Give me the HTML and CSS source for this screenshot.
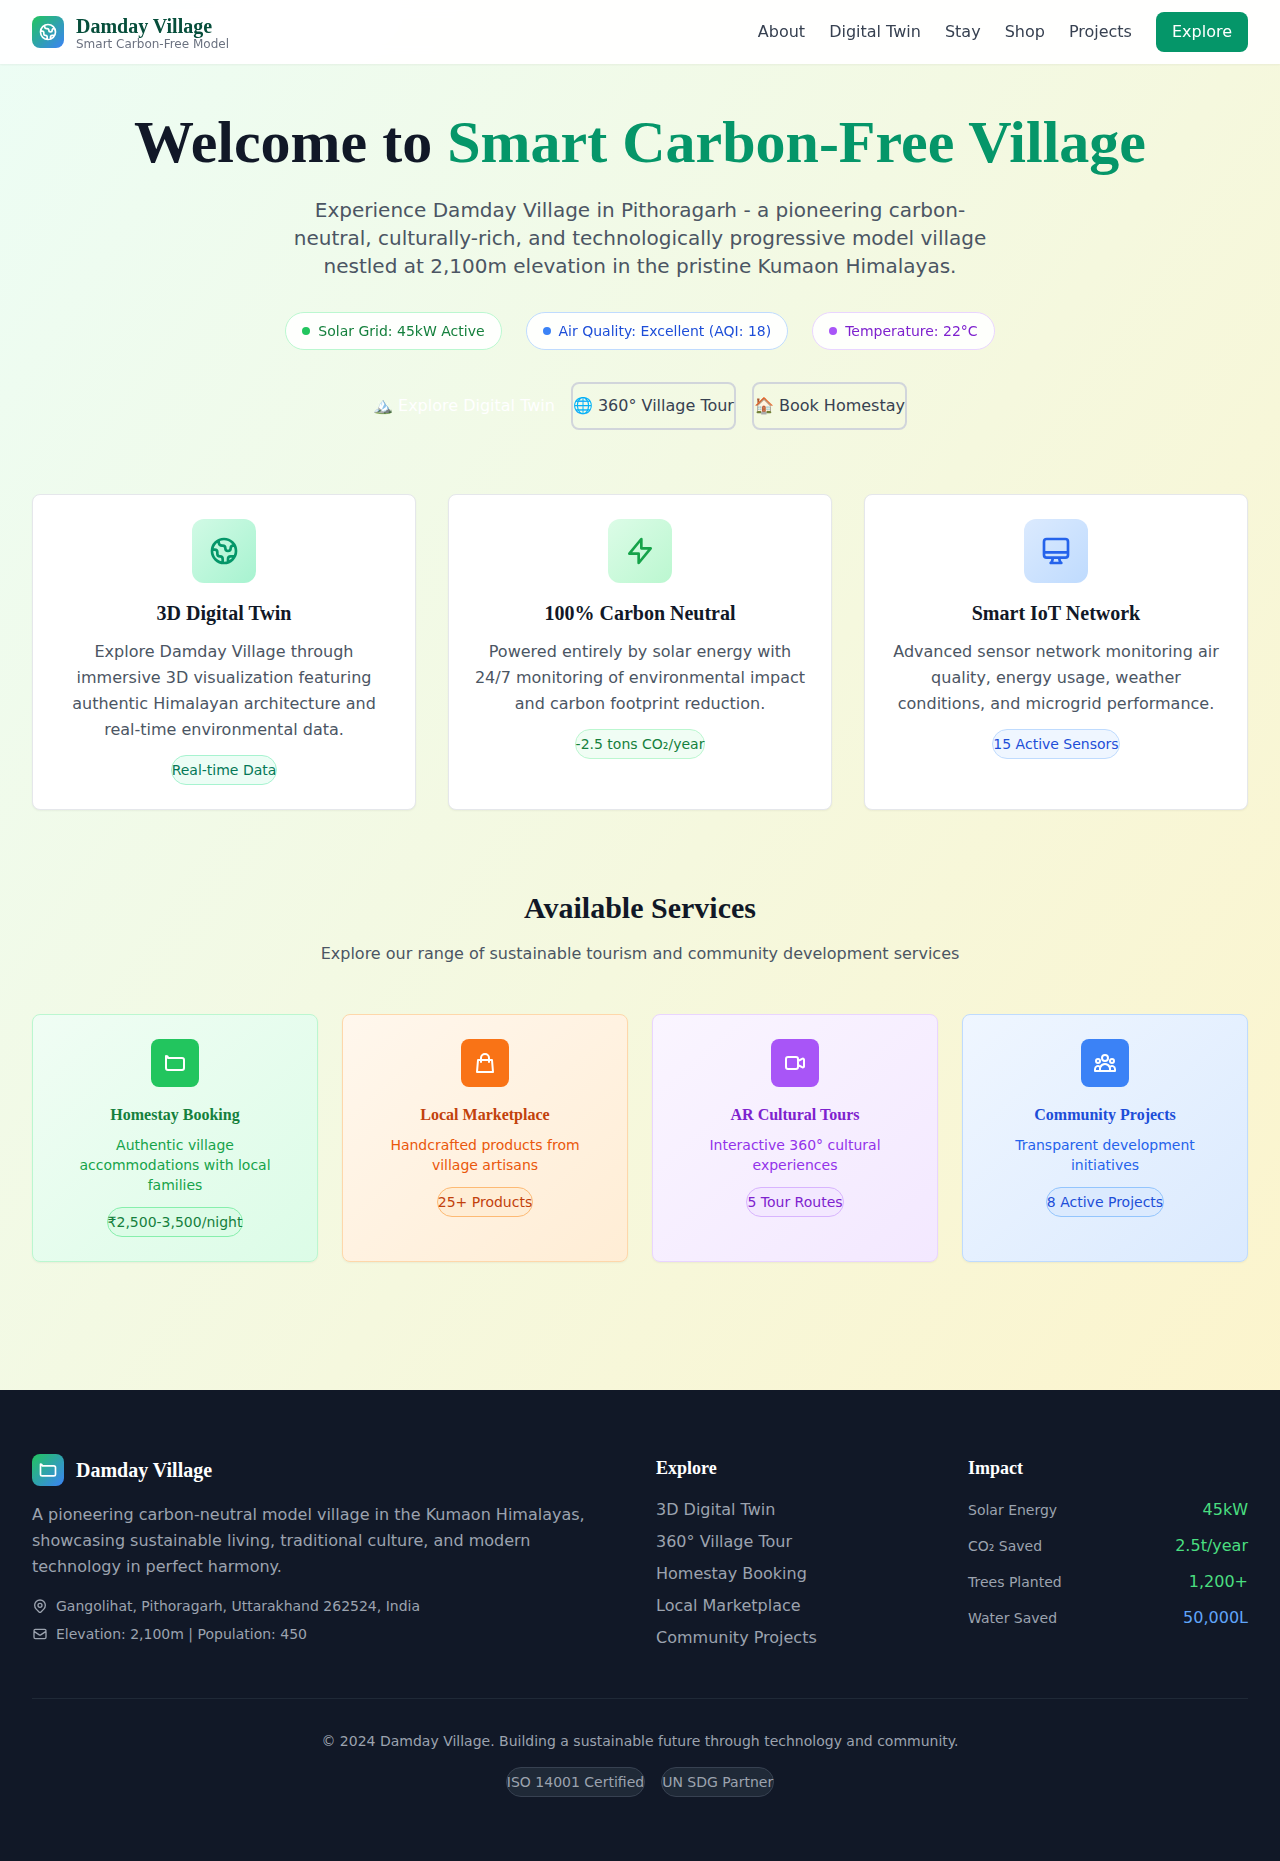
FILE: index.html
```html
<!DOCTYPE html>
<html lang="en">
<head>
<meta charset="utf-8">
<title>Damday Village</title>
<link rel="stylesheet" href="styles.css">
</head>
<body>
<svg class="sprite" width="0" height="0" aria-hidden="true">
  <symbol id="globe" viewBox="0 0 24 24"><path d="M3.055 11H5a2 2 0 012 2v1a2 2 0 002 2 2 2 0 012 2v2.945M8 3.935V5.5A2.5 2.5 0 0010.5 8h.5a2 2 0 012 2 2 2 0 104 0 2 2 0 012-2h1.064M15 20.488V18a2 2 0 012-2h3.064M21 12a9 9 0 11-18 0 9 9 0 0118 0z"/></symbol>
  <symbol id="bolt" viewBox="0 0 24 24"><path d="M13 10V3L4 14h7v7l9-11h-7z"/></symbol>
  <symbol id="monitor" viewBox="0 0 24 24"><path d="M9.75 17L9 20l-1 1h8l-1-1-.75-3M3 13h18M5 17h14a2 2 0 002-2V5a2 2 0 00-2-2H5a2 2 0 00-2 2v10a2 2 0 002 2z"/></symbol>
  <symbol id="stay" viewBox="0 0 24 24"><path d="M3 7v10a2 2 0 002 2h14a2 2 0 002-2V9a2 2 0 00-2-2H5a2 2 0 00-2-2z"/></symbol>
  <symbol id="bag" viewBox="0 0 24 24"><path d="M16 11V7a4 4 0 00-8 0v4M5 9h14l1 12H4L5 9z"/></symbol>
  <symbol id="video" viewBox="0 0 24 24"><path d="M15 10l4.553-2.276A1 1 0 0121 8.618v6.764a1 1 0 01-1.447.894L15 14M5 18h8a2 2 0 002-2V8a2 2 0 00-2-2H5a2 2 0 00-2 2v8a2 2 0 002 2z"/></symbol>
  <symbol id="group" viewBox="0 0 24 24"><path d="M17 20h5v-2a3 3 0 00-5.356-1.857M17 20H7m10 0v-2c0-.656-.126-1.283-.356-1.857M7 20H2v-2a3 3 0 015.356-1.857M7 20v-2c0-.656.126-1.283.356-1.857m0 0a5.002 5.002 0 019.288 0M15 7a3 3 0 11-6 0 3 3 0 016 0zm6 3a2 2 0 11-4 0 2 2 0 014 0zM7 10a2 2 0 11-4 0 2 2 0 014 0z"/></symbol>
  <symbol id="pin" viewBox="0 0 24 24"><path d="M17.657 16.657L13.414 20.9a1.998 1.998 0 01-2.827 0l-4.244-4.243a8 8 0 1111.314 0z"/><path d="M15 11a3 3 0 11-6 0 3 3 0 016 0z"/></symbol>
  <symbol id="mail" viewBox="0 0 24 24"><path d="M3 8l7.89 5.26a2 2 0 002.22 0L21 8M5 19h14a2 2 0 002-2V7a2 2 0 00-2-2H5a2 2 0 00-2 2v10a2 2 0 002 2z"/></symbol>
</svg>

<div class="page">
  <header class="header">
    <div class="brand">
      <div class="logo"><svg class="icon icon-20"><use href="#globe"/></svg></div>
      <div>
        <div class="brand-name">Damday Village</div>
        <p class="brand-sub">Smart Carbon-Free Model</p>
      </div>
    </div>
    <nav class="nav">
      <a>About</a><a>Digital Twin</a><a>Stay</a><a>Shop</a><a>Projects</a>
      <button class="nav-cta">Explore</button>
    </nav>
  </header>

  <main class="main">
    <section class="hero">
      <h1>Welcome to <span>Smart Carbon-Free Village</span></h1>
      <p class="lead">Experience Damday Village in Pithoragarh - a pioneering carbon-neutral, culturally-rich, and technologically progressive model village nestled at 2,100m elevation in the pristine Kumaon Himalayas.</p>
      <div class="stats">
        <div class="stat stat-green"><i class="dot"></i><span>Solar Grid: 45kW Active</span></div>
        <div class="stat stat-blue"><i class="dot"></i><span>Air Quality: Excellent (AQI: 18)</span></div>
        <div class="stat stat-purple"><i class="dot"></i><span>Temperature: 22°C</span></div>
      </div>
      <div class="actions">
        <button class="btn btn-primary">🏔️ Explore Digital Twin</button>
        <button class="btn btn-outline">🌐 360° Village Tour</button>
        <button class="btn btn-outline">🏠 Book Homestay</button>
      </div>
    </section>

    <section class="features">
      <article class="feature emerald">
        <div class="tile"><svg class="icon icon-32"><use href="#globe"/></svg></div>
        <h3>3D Digital Twin</h3>
        <p>Explore Damday Village through immersive 3D visualization featuring authentic Himalayan architecture and real-time environmental data.</p>
        <div class="badge">Real-time Data</div>
      </article>
      <article class="feature green">
        <div class="tile"><svg class="icon icon-32"><use href="#bolt"/></svg></div>
        <h3>100% Carbon Neutral</h3>
        <p>Powered entirely by solar energy with 24/7 monitoring of environmental impact and carbon footprint reduction.</p>
        <div class="badge">-2.5 tons CO₂/year</div>
      </article>
      <article class="feature blue">
        <div class="tile"><svg class="icon icon-32"><use href="#monitor"/></svg></div>
        <h3>Smart IoT Network</h3>
        <p>Advanced sensor network monitoring air quality, energy usage, weather conditions, and microgrid performance.</p>
        <div class="badge">15 Active Sensors</div>
      </article>
    </section>

    <section class="services">
      <h2>Available Services</h2>
      <p class="services-sub">Explore our range of sustainable tourism and community development services</p>
      <div class="service-grid">
        <article class="service s-green">
          <div class="tile"><svg class="icon icon-24"><use href="#stay"/></svg></div>
          <h3>Homestay Booking</h3>
          <p>Authentic village accommodations with local families</p>
          <div class="badge">₹2,500-3,500/night</div>
        </article>
        <article class="service s-orange">
          <div class="tile"><svg class="icon icon-24"><use href="#bag"/></svg></div>
          <h3>Local Marketplace</h3>
          <p>Handcrafted products from village artisans</p>
          <div class="badge">25+ Products</div>
        </article>
        <article class="service s-purple">
          <div class="tile"><svg class="icon icon-24"><use href="#video"/></svg></div>
          <h3>AR Cultural Tours</h3>
          <p>Interactive 360° cultural experiences</p>
          <div class="badge">5 Tour Routes</div>
        </article>
        <article class="service s-blue">
          <div class="tile"><svg class="icon icon-24"><use href="#group"/></svg></div>
          <h3>Community Projects</h3>
          <p>Transparent development initiatives</p>
          <div class="badge">8 Active Projects</div>
        </article>
      </div>
    </section>
  </main>

  <footer class="footer">
    <div class="footer-grid">
      <div class="about">
        <div class="brand">
          <div class="logo"><svg class="icon icon-20"><use href="#stay"/></svg></div>
          <div class="footer-name">Damday Village</div>
        </div>
        <p class="about-text">A pioneering carbon-neutral model village in the Kumaon Himalayas, showcasing sustainable living, traditional culture, and modern technology in perfect harmony.</p>
        <div class="contacts">
          <div class="contact"><svg class="icon icon-16"><use href="#pin"/></svg><span>Gangolihat, Pithoragarh, Uttarakhand 262524, India</span></div>
          <div class="contact"><svg class="icon icon-16"><use href="#mail"/></svg><span>Elevation: 2,100m | Population: 450</span></div>
        </div>
      </div>
      <div>
        <h4>Explore</h4>
        <ul class="links">
          <li>3D Digital Twin</li><li>360° Village Tour</li><li>Homestay Booking</li><li>Local Marketplace</li><li>Community Projects</li>
        </ul>
      </div>
      <div>
        <h4>Impact</h4>
        <div class="impact">
          <div class="row"><span class="label">Solar Energy</span><span class="value">45kW</span></div>
          <div class="row"><span class="label">CO₂ Saved</span><span class="value">2.5t/year</span></div>
          <div class="row"><span class="label">Trees Planted</span><span class="value">1,200+</span></div>
          <div class="row"><span class="label">Water Saved</span><span class="value value-blue">50,000L</span></div>
        </div>
      </div>
    </div>
    <div class="legal">
      <p>© 2024 Damday Village. Building a sustainable future through technology and community.</p>
      <div class="certs">
        <div class="badge">ISO 14001 Certified</div>
        <div class="badge">UN SDG Partner</div>
      </div>
    </div>
  </footer>
</div>
</body>
</html>
```
FILE: styles.css
```css
*, *::before, *::after { box-sizing: border-box; }

body, h1, h2, h3, h4, p, ul { margin: 0; padding: 0; }

body {
  font-family: "DejaVu Sans", "Noto Color Emoji", sans-serif;
  font-size: 16px;
  line-height: 24px;
  color: #111827;
}

h1, h2, h3, h4, .brand-name, .footer-name {
  font-family: "Liberation Serif", serif;
  font-weight: 700;
}

button {
  font: inherit;
  border: 0;
  padding: 0;
  background: transparent;
}

.sprite { position: absolute; }

.page {
  min-height: 100vh;
  background: linear-gradient(to bottom right, #ecfdf5, #f5f8de 50%, #fef3c7);
}

.icon {
  display: block;
  fill: none;
  stroke: currentColor;
  stroke-width: 2;
  stroke-linecap: round;
  stroke-linejoin: round;
}
.icon-16 { width: 16px; height: 16px; }
.icon-20 { width: 20px; height: 20px; }
.icon-24 { width: 24px; height: 24px; }
.icon-32 { width: 32px; height: 32px; }

/* Header */
.header {
  height: 64px;
  padding: 0 32px;
  display: flex;
  align-items: center;
  justify-content: space-between;
  background: rgba(255, 255, 255, 0.95);
  box-shadow: 0 1px 2px rgba(0, 0, 0, 0.05);
  backdrop-filter: blur(8px);
}
.brand { display: flex; align-items: center; gap: 12px; }
.logo {
  width: 32px;
  height: 32px;
  display: grid;
  place-items: center;
  color: #fff;
  border-radius: 8px;
  background: linear-gradient(to bottom right, #22c55e, #3b82f6);
}
.brand-name { font-size: 20px; line-height: 28px; color: #064e3b; }
.brand-sub { margin-top: -4px; font-size: 12px; line-height: 16px; color: #6b7280; }
.nav { display: flex; align-items: center; gap: 24px; color: #374151; }
.nav-cta {
  height: 40px;
  padding: 0 16px;
  color: #fff;
  background: #059669;
  border-radius: 8px;
}

/* Hero */
.main { padding: 48px 32px 128px; }
.hero { text-align: center; }
h1 { font-size: 60px; line-height: 60px; }
h1 span { color: #059669; }
.lead {
  max-width: 720px;
  margin: 24px auto 32px;
  font-size: 20px;
  line-height: 28px;
  color: #4b5563;
}
.stats { display: flex; justify-content: center; gap: 24px; }
.stat {
  display: flex;
  align-items: center;
  gap: 8px;
  padding: 8px 16px;
  font-size: 14px;
  line-height: 20px;
  border: 1px solid;
  border-radius: 19px;
  background: rgba(255, 255, 255, 0.9);
  backdrop-filter: blur(4px);
}
.dot { width: 8px; height: 8px; border-radius: 50%; }
.stat-green { color: #15803d; border-color: #bbf7d0; }
.stat-green .dot { background: #22c55e; }
.stat-blue { color: #1d4ed8; border-color: #bfdbfe; }
.stat-blue .dot { background: #3b82f6; }
.stat-purple { color: #7e22ce; border-color: #e9d5ff; }
.stat-purple .dot { background: #a855f7; }

.actions { display: flex; justify-content: center; gap: 16px; margin-top: 32px; }
.btn { height: 48px; border-radius: 8px; white-space: nowrap; }
.btn-primary { color: #fff; }
.btn-outline { color: #374151; border: 2px solid #d1d5db; }

/* Feature cards */
.features {
  display: grid;
  grid-template-columns: repeat(3, 1fr);
  gap: 32px;
  margin-top: 64px;
}
.feature, .service {
  display: flex;
  flex-direction: column;
  align-items: center;
  padding: 24px;
  text-align: center;
  border: 1px solid #e5e7eb;
  border-radius: 8px;
  box-shadow: 0 1px 2px rgba(0, 0, 0, 0.05);
}
.feature { background: #fff; }
.tile { display: grid; place-items: center; }
.feature .tile { width: 64px; height: 64px; border-radius: 12px; }
.feature h3 { margin: 16px 0 12px; font-size: 20px; line-height: 28px; }
.feature p { line-height: 26px; color: #4b5563; }
.badge {
  margin-top: 12px;
  padding: 4px 0;
  font-size: 14px;
  line-height: 20px;
  border: 1px solid;
  border-radius: 15px;
  white-space: nowrap;
}
.emerald .tile { color: #059669; background: linear-gradient(to bottom right, #d1fae5, #a7f3d0); }
.emerald .badge { color: #047857; background: #ecfdf5; border-color: #a7f3d0; }
.green .tile { color: #16a34a; background: linear-gradient(to bottom right, #dcfce7, #bbf7d0); }
.green .badge { color: #15803d; background: #f0fdf4; border-color: #bbf7d0; }
.blue .tile { color: #2563eb; background: linear-gradient(to bottom right, #dbeafe, #bfdbfe); }
.blue .badge { color: #1d4ed8; background: #eff6ff; border-color: #bfdbfe; }

/* Services */
.services { margin-top: 80px; text-align: center; }
h2 { font-size: 30px; line-height: 36px; }
.services-sub { margin: 16px 0 48px; color: #4b5563; }
.service-grid { display: grid; grid-template-columns: repeat(4, 1fr); gap: 24px; }
.service .tile { width: 48px; height: 48px; color: #fff; border-radius: 8px; }
.service h3 { margin: 16px 0 8px; font-size: 16px; line-height: 24px; }
.service p { font-size: 14px; line-height: 20px; }

.s-green { background: linear-gradient(to bottom right, #f0fdf4, #dcfce7); border-color: #bbf7d0; }
.s-green .tile { background: #22c55e; }
.s-green h3 { color: #15803d; }
.s-green p { color: #16a34a; }
.s-green .badge { color: #15803d; background: #dcfce7; border-color: #86efac; }

.s-orange { background: linear-gradient(to bottom right, #fff7ed, #ffedd5); border-color: #fed7aa; }
.s-orange .tile { background: #f97316; }
.s-orange h3 { color: #c2410c; }
.s-orange p { color: #ea580c; }
.s-orange .badge { color: #c2410c; background: #ffedd5; border-color: #fdba74; }

.s-purple { background: linear-gradient(to bottom right, #faf5ff, #f3e8ff); border-color: #e9d5ff; }
.s-purple .tile { background: #a855f7; }
.s-purple h3 { color: #7e22ce; }
.s-purple p { color: #9333ea; }
.s-purple .badge { color: #7e22ce; background: #f3e8ff; border-color: #d8b4fe; }

.s-blue { background: linear-gradient(to bottom right, #eff6ff, #dbeafe); border-color: #bfdbfe; }
.s-blue .tile { background: #3b82f6; }
.s-blue h3 { color: #1d4ed8; }
.s-blue p { color: #2563eb; }
.s-blue .badge { color: #1d4ed8; background: #dbeafe; border-color: #93c5fd; }

/* Footer */
.footer { padding: 64px 32px; color: #9ca3af; background: #111827; }
.footer-grid { display: grid; grid-template-columns: repeat(4, 1fr); gap: 32px; }
.about { grid-column: span 2; }
.footer-name { font-size: 20px; line-height: 28px; color: #fff; }
.about-text { margin: 16px 0; max-width: 576px; line-height: 26px; }
.contacts { display: grid; gap: 8px; font-size: 14px; line-height: 20px; }
.contact { display: flex; align-items: center; gap: 8px; }
h4 { margin-bottom: 16px; font-size: 18px; line-height: 28px; color: #fff; }
.links { display: grid; gap: 8px; list-style: none; }
.impact { display: grid; gap: 12px; }
.row { display: flex; align-items: center; justify-content: space-between; }
.label { font-size: 14px; line-height: 20px; }
.value { color: #4ade80; }
.value-blue { color: #60a5fa; }
.legal {
  margin-top: 48px;
  padding-top: 32px;
  text-align: center;
  font-size: 14px;
  line-height: 20px;
  border-top: 1px solid #1f2937;
}
.certs { display: flex; justify-content: center; gap: 16px; margin-top: 16px; }
.certs .badge { margin-top: 0; background: #1f2937; border-color: #374151; }
```
